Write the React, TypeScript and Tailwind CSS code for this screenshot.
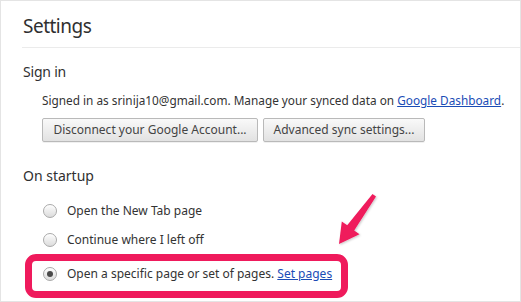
import React from "react";

function Radio({ checked }: { checked?: boolean }) {
  return (
    <span className="relative inline-flex h-[14px] w-[14px] shrink-0 items-center justify-center rounded-full border border-[#a9a9a9] bg-gradient-to-b from-[#fdfdfd] to-[#dcdcdc] shadow-[inset_0_1px_1px_rgba(255,255,255,0.9)]">
      {checked && <span className="h-[6px] w-[6px] rounded-full bg-[#4a4a4a]" />}
    </span>
  );
}

function Btn({ children, w }: { children: React.ReactNode; w: string }) {
  return (
    <button
      className={`h-[24px] ${w} rounded-[2px] border border-[#b9b9b9] bg-gradient-to-b from-[#f9f9f9] to-[#e2e2e2] text-[12px] leading-none text-[#444] shadow-[0_1px_0_rgba(0,0,0,0.06)]`}
    >
      {children}
    </button>
  );
}

export default function App() {
  return (
    <div
      className="relative h-[302px] w-[521px] overflow-hidden border border-[#e4e4e4] bg-white text-[#333]"
      style={{ fontFamily: '"Noto Sans", "Open Sans", sans-serif' }}
    >
      <div className="ml-[21px] h-[47px] border-b border-[#ebebeb] pl-[1px] pt-[11px]">
        <div className="text-[19px] leading-[28px] tracking-[-0.5px] text-[#303030]">Settings</div>
      </div>

      <div className="pl-[22px] pt-[14px]">
        <div className="text-[14px] leading-[20px] tracking-[-0.2px] text-[#303030]">Sign in</div>
        <div className="pl-[19px] pt-[10px]">
          <div className="whitespace-nowrap text-[11.8px] leading-[16px] text-[#333]">
            Signed in as srinija10@gmail.com. Manage your synced data on{" "}
            <span className="text-[#1a4cb6] underline">Google Dashboard</span>.
          </div>
          <div className="mt-[10px] flex gap-[5px]">
            <Btn w="w-[216px]">Disconnect your Google Account...</Btn>
            <Btn w="w-[162px]">Advanced sync settings...</Btn>
          </div>
        </div>

        <div className="pt-[24px] text-[14px] leading-[20px] text-[#303030]">On startup</div>
        <div className="pl-[20px] pt-[16px] text-[12px] text-[#333]">
          <div className="flex h-[18px] items-center gap-[10px]">
            <Radio />
            <span>Open the New Tab page</span>
          </div>
          <div className="mt-[11px] flex h-[18px] items-center gap-[10px]">
            <Radio />
            <span>Continue where I left off</span>
          </div>
          <div className="mt-[16px] flex h-[18px] items-center gap-[10px]">
            <Radio checked />
            <span>
              Open a specific page or set of pages.{" "}
              <span className="text-[#1a4cb6] underline">Set pages</span>
            </span>
          </div>
        </div>
      </div>

      {/* annotation box */}
      <div className="absolute left-[24px] top-[253px] h-[44px] w-[323px] rounded-[11px] border-[7px] border-[#ef1a5c]" />

      {/* annotation arrow */}
      <svg className="absolute left-[325px] top-[185px]" width="60" height="65" viewBox="0 0 60 65">
        <defs>
          <filter id="sh" x="-20%" y="-20%" width="140%" height="140%">
            <feDropShadow dx="1" dy="1" stdDeviation="1" floodColor="#000" floodOpacity="0.22" />
          </filter>
        </defs>
        <path
          d="M46.5 8 L50 10.5 L28.2 44.4 L33.5 48.2 L13 58 L15.8 35.4 L21.2 39.2 Z"
          fill="#ef1a5c"
          filter="url(#sh)"
        />
      </svg>
    </div>
  );
}
